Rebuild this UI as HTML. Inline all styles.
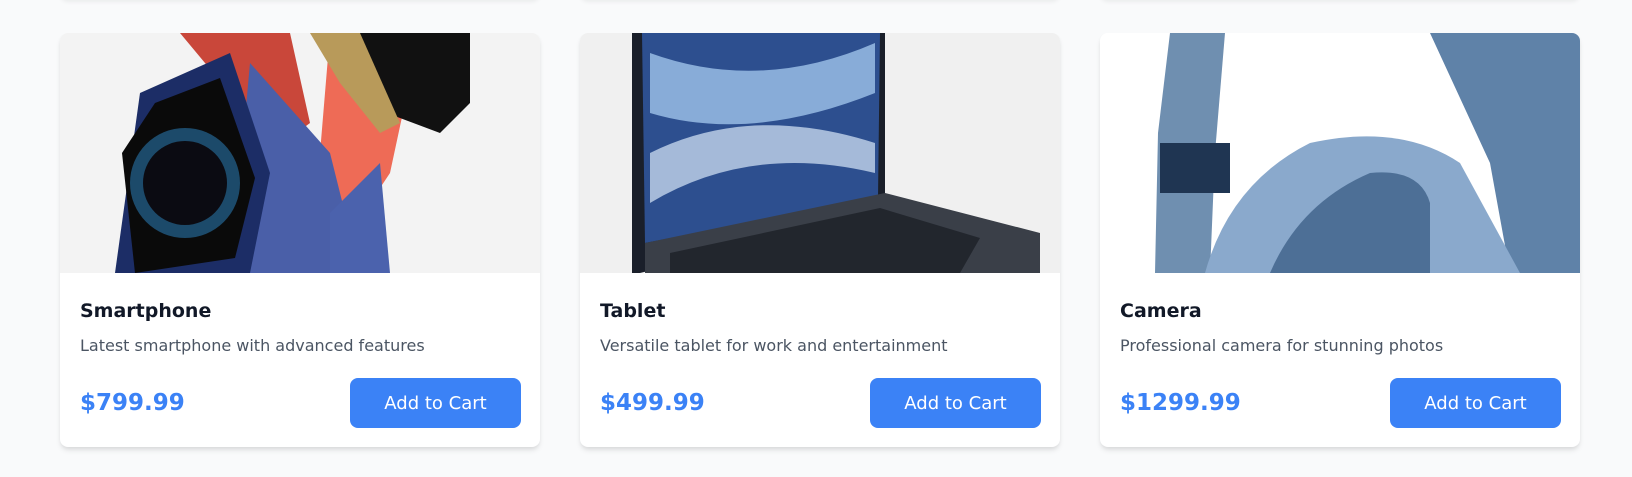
<!DOCTYPE html>
<html><head><meta charset="utf-8"><style>
body{margin:0;width:1632px;height:477px;background:#f9fafb;font-family:"DejaVu Sans","Liberation Sans",sans-serif;position:relative;overflow:hidden}
.top{position:absolute;top:-20px;height:20px;width:480px;background:#fff;box-shadow:0 2px 4px rgba(0,0,0,.06);border-radius:8px}
.card{position:absolute;top:33px;width:480px;height:414px;background:#fff;border-radius:8px;box-shadow:0 4px 6px -1px rgba(0,0,0,.1),0 2px 4px -1px rgba(0,0,0,.06);overflow:hidden}
.img{height:240px;position:relative;overflow:hidden}
.t{position:absolute;left:20px;top:267px;font-size:19px;font-weight:bold;color:#111827}
.d{position:absolute;left:20px;top:303px;font-size:16px;color:#4b5563}
.p{position:absolute;left:20px;top:357px;font-size:23px;font-weight:bold;color:#3b82f6}
.b{position:absolute;right:19px;top:345px;width:171px;height:50px;background:#3b82f6;color:#fff;border-radius:8px;font-size:18px;display:flex;align-items:center;justify-content:center}
</style></head><body>
<div class="top" style="left:60px"></div><div class="top" style="left:580px"></div><div class="top" style="left:1100px"></div>

<div class="card" style="left:60px">
<div class="img" style="background:#f3f3f3">
<svg width="480" height="240">
<path d="M120 0 L230 0 L250 90 L210 120 L170 60 Z" fill="#c9473a"/>
<path d="M270 0 L360 0 L330 140 L270 230 L220 220 L260 120 Z" fill="#ee6b56"/>
<path d="M260 0 L410 0 L410 70 L380 100 L300 70 Z" fill="#111"/>
<path d="M250 0 L300 0 L340 90 L320 100 L280 50 Z" fill="#b89a5a"/>
<path d="M190 30 L270 120 L300 240 L190 240 L180 140 Z" fill="#4a5fa8"/>
<path d="M270 180 L320 130 L330 240 L270 240 Z" fill="#4b62ad"/>
<path d="M80 60 L170 20 L210 140 L190 240 L55 240 Z" fill="#1c2d66"/>
<path d="M95 70 L160 45 L195 145 L175 225 L75 240 L62 120 Z" fill="#0a0a0a"/>
<circle cx="125" cy="150" r="55" fill="#1c4a6a"/>
<circle cx="125" cy="150" r="42" fill="#0b0b12"/>
</svg></div>
<div class="t">Smartphone</div><div class="d">Latest smartphone with advanced features</div>
<div class="p">$799.99</div><div class="b">Add to Cart</div></div>

<div class="card" style="left:580px">
<div class="img" style="background:#f0f0f0">
<svg width="480" height="240">
<path d="M52 0 L305 0 L305 180 L60 240 L52 240 Z" fill="#1a1f2a"/>
<path d="M62 0 L300 0 L298 165 L65 210 Z" fill="#2d4f8f"/>
<path d="M70 20 Q180 60 295 10 L295 60 Q170 110 70 80 Z" fill="#9fc3ea" opacity=".8"/>
<path d="M70 120 Q170 70 295 110 L295 140 Q170 110 70 170 Z" fill="#d9e8f8" opacity=".7"/>
<path d="M65 210 L305 160 L460 200 L460 240 L65 240 Z" fill="#3a3f48"/>
<path d="M90 220 L300 175 L400 205 L380 240 L90 240 Z" fill="#22262d"/>
</svg></div>
<div class="t">Tablet</div><div class="d">Versatile tablet for work and entertainment</div>
<div class="p">$499.99</div><div class="b">Add to Cart</div></div>

<div class="card" style="left:1100px">
<div class="img" style="background:#fff">
<svg width="480" height="240">
<path d="M70 0 L125 0 L115 120 L110 240 L55 240 L58 100 Z" fill="#6f8fb0"/>
<path d="M330 0 L480 0 L480 240 L410 240 L390 130 Z" fill="#5f82a8"/>
<path d="M105 240 Q130 150 210 110 Q300 90 360 130 L420 240 Z" fill="#8aa9cc"/>
<path d="M170 240 Q200 170 270 140 Q320 135 330 170 L330 240 Z" fill="#4d6f96"/>
<rect x="60" y="110" width="70" height="50" fill="#1f3552"/>
</svg></div>
<div class="t">Camera</div><div class="d">Professional camera for stunning photos</div>
<div class="p">$1299.99</div><div class="b">Add to Cart</div></div>
</body></html>
